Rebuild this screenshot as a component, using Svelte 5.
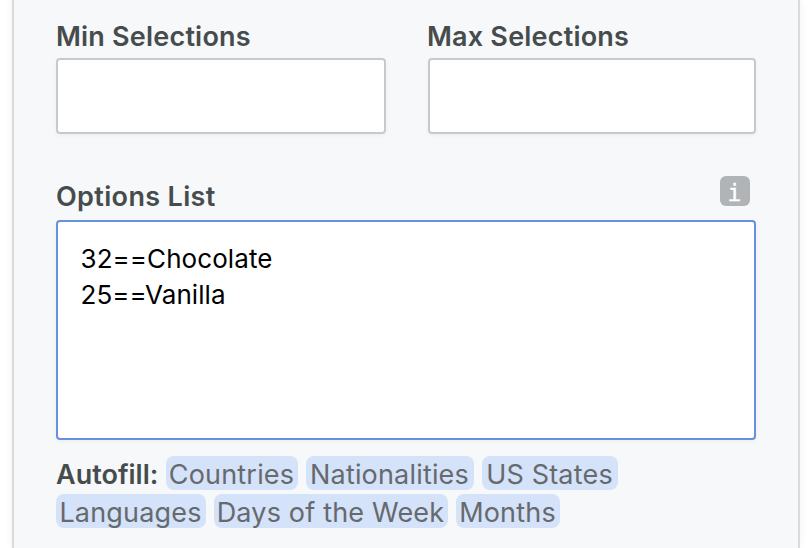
<script lang="ts">
	let min = $state('');
	let max = $state('');
	let options = $state('32==Chocolate\n25==Vanilla');

	const autofill = [
		[
			{ name: 'Countries', width: 132 },
			{ name: 'Nationalities', width: 168 },
			{ name: 'US States', width: 136 }
		],
		[
			{ name: 'Languages', width: 150 },
			{ name: 'Days of the Week', width: 234 },
			{ name: 'Months', width: 104 }
		]
	];
</script>

<div class="panel">
	<div class="limits">
		<label class="field">
			<span class="label">Min Selections</span>
			<input type="text" bind:value={min} />
		</label>
		<label class="field">
			<span class="label max-label">Max Selections</span>
			<input type="text" bind:value={max} />
		</label>
	</div>

	<div class="heading">
		<label class="label options-label" for="options">Options List</label>
		<span class="info">i</span>
	</div>
	<textarea id="options" spellcheck="false" bind:value={options}></textarea>

	<div class="autofill">
		{#each autofill as row, i}
			<div class="row">
				{#if i === 0}<strong>Autofill:</strong>{/if}
				{#each row as { name, width }}
					<span class="pill" style="width: {width}px">{name}</span>
				{/each}
			</div>
		{/each}
	</div>
</div>

<style>
	:global(body) {
		background: #fff;
		overflow: hidden;
	}

	.panel {
		box-sizing: border-box;
		width: 788px;
		height: 548px;
		margin-left: 12px;
		padding: 18px 42px 0;
		border: solid #d9dadb;
		border-width: 0 2px;
		background: #f6f8fa;
		box-shadow: 0 0 8px rgba(0, 0, 0, 0.06);
		font-family: Inter, 'Liberation Sans', sans-serif;
		font-size: 27px;
		color: #464c4d;
	}

	.limits {
		display: grid;
		grid-template-columns: 330px 328px;
		gap: 42px;
	}

	.field {
		display: block;
	}

	.label {
		display: block;
		height: 40px;
		line-height: 37px;
		font-weight: 560;
		letter-spacing: 0.2px;
	}

	.max-label {
		margin-left: -1px;
	}

	input,
	textarea {
		display: block;
		box-sizing: border-box;
		width: 100%;
		margin: 0;
		border: 2px solid #c9c9ca;
		border-radius: 4px;
		outline: none;
		background: #fff;
		box-shadow: 0 2px 4px rgba(0, 0, 0, 0.04);
		font: inherit;
		color: #000;
	}

	input {
		height: 76px;
		padding: 0 22px;
	}

	.heading {
		display: flex;
		justify-content: space-between;
		margin-top: 42px;
		padding-right: 6px;
	}

	.options-label {
		height: 44px;
		line-height: 41px;
		letter-spacing: 0.35px;
	}

	.info {
		box-sizing: border-box;
		width: 30px;
		height: 30px;
		padding-right: 1px;
		border-radius: 6px;
		background: #b0b4b7;
		color: #fff;
		font: 23px/34px 'DejaVu Sans Mono', monospace;
		text-align: center;
		-webkit-text-stroke: 0.3px #fff;
	}

	textarea {
		height: 220px;
		padding: 19px 22.5px;
		border-color: #6990df;
		resize: none;
		font-size: 26px;
		line-height: 36px;
		letter-spacing: 0.07px;
	}

	.autofill {
		display: grid;
		gap: 4px;
		margin-top: 16px;
	}

	.row {
		display: flex;
		gap: 8px;
		height: 34px;
		line-height: 37px;
	}

	strong {
		width: 102px;
		font-weight: 580;
		letter-spacing: 0;
	}

	.pill {
		box-sizing: border-box;
		padding-right: 1px;
		border-radius: 8px;
		background: #d4e2fa;
		color: #666a6c;
		letter-spacing: 0.18px;
		text-align: center;
		white-space: nowrap;
	}
</style>
